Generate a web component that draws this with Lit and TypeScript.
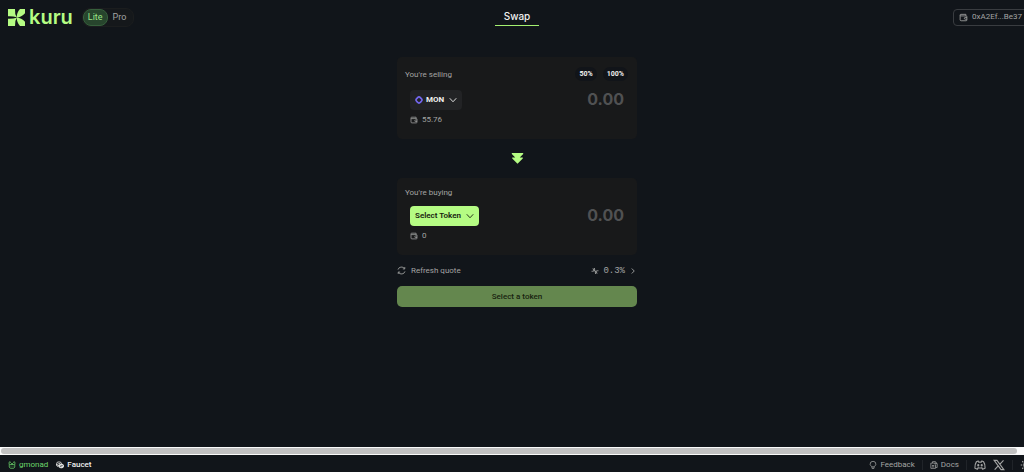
import { LitElement, html, css, svg } from "lit";
import { customElement, property, state } from "lit/decorators.js";

const icons = {
  logo: svg`<path d="M0 0H7Q6.600 5 8.700 8.300Q5 7 0 7.200zM17 0v4.200Q13.500 8.200 8.700 8.500Q8.800 3.400 12 0zM0 9.800Q5 10 8.700 8.700Q6.600 12 7 17H0zM8.700 8.500Q13.500 8.800 17 12.800V17h-5Q8.800 13.600 8.700 8.500z" fill="currentColor"/>`,
  wallet: svg`<path d="M2 4.300V12a1.800 1.800 0 0 0 1.800 1.800h8.800a1.400 1.400 0 0 0 1.400-1.400V6.600a1.400 1.400 0 0 0-1.400-1.400H3.300A1.300 1.300 0 0 1 3.300 2.400h8.900v2.600M14 8h-3a1.500 1.500 0 0 0 0 3h3"/>`,
  chevron: svg`<path d="M1.500 4.500 8 11.500l6.500-7" stroke-width="1.800"/>`,
  next: svg`<path d="m5.500 3 5 5-5 5" stroke-width="1.800"/>`,
  token: svg`<path d="M8 1.900C9.600 1.900 14.100 6.400 14.100 8S9.600 14.100 8 14.100 1.900 9.600 1.900 8 6.400 1.900 8 1.900z" stroke-width="3.400"/>`,
  down: svg`<path d="M1 1.200h14v1.400L10.800 6.800H14.500v1.200L8 14.500 1.500 8v-1.200H5.200L1 2.600z" fill="currentColor" stroke="none"/>`,
  refresh: svg`<path d="M1.800 6.400A6.400 6.400 0 0 1 13.400 4.800M14.200 9.600A6.400 6.400 0 0 1 2.600 11.200M13.800 1.800v3.400h-3.400M2.200 14.200v-3.400h3.400"/>`,
  slip: svg`<path d="M1 8.500h4L6.500 2l3 12L11 7.500h4M3 3.500 13 12.500" stroke-width="1.600"/>`,
  frog: svg`<path d="M2.500 5.500V12l2 2.500h7l2-2.500V5.500L11.500 7h-7zM1.500 5 3 1.500 6 3M14.500 5 13 1.500 10 3M6 7l2-3 2 3M6 9.500V11M10 9.500V11"/>`,
  coins: svg`<ellipse cx="6" cy="5.500" rx="5" ry="3.800"/><path d="M1 6v2.400c0 1.800 2 2.800 4.300 3M2.500 6.500l6-2"/><ellipse cx="10.600" cy="10" rx="4.800" ry="3.800" fill="#d8dadb"/><path d="M8 10.800 13 9" stroke="#11151a"/>`,
  bulb: svg`<path d="M5.500 11C3.300 9.600 2.300 8 2.300 6.300a5.700 5.700 0 0 1 11.400 0c0 1.700-1 3.300-3.200 4.700l-.8 4H6.300zM5.700 11.700h4.600"/>`,
  docs: svg`<path d="M5 4V1.300h5.500L14.300 5v8H12M10.300 1.500V5H14M1.700 4.200h6.100L11 7.400v7.300H1.700zM4 9h4.500M4 11.700h4.500"/>`,
  discord: svg`<path d="M5.500 2.700 3.300 3.500C1.600 6 1 9 1.200 12.200c1.200.9 2.300 1.200 3.400 1.300l1-1.800c1.600.5 3.200.5 4.800 0l1 1.800c1.100-.1 2.200-.4 3.400-1.300.2-3.200-.4-6.200-2.100-8.700l-2.200-.8-.8 1.500H6.300z"/><ellipse cx="5.700" cy="8.300" rx=".7" ry=".9"/><ellipse cx="10.300" cy="8.300" rx=".7" ry=".9"/>`,
  x: svg`<path d="M1.500 1.800h3.800l9.200 12.400h-3.800zM14 1.800 8.700 7.600M7 9.100l-4.800 5.100"/>`,
  sun: svg`<circle cx="8" cy="8" r="3"/><path d="M8 1v2M8 13v2M1 8h2M13 8h2M3 3l1.500 1.500M11.500 11.500 13 13M3 13l1.500-1.500M11.500 4.500 13 3"/>`,
};

type IconName = keyof typeof icons;

@customElement("kuru-icon")
export class KuruIcon extends LitElement {
  static styles = css`
    :host { display: inline-flex; flex: none; width: 8px; height: 8px; }
    svg { width: 100%; height: 100%; fill: none; stroke: currentColor; stroke-width: 1.5; }
    .solid { stroke: none; }
  `;
  @property() name: IconName = "wallet";
  render() {
    const solid = this.name === "logo";
    return html`<svg class=${solid ? "solid" : ""} viewBox=${solid ? "0 0 17 17" : "0 0 16 16"} aria-hidden="true">${icons[this.name]}</svg>`;
  }
}

@customElement("swap-card")
export class SwapCard extends LitElement {
  static styles = css`
    :host { display: block; background: #18191a; border-radius: 5px; padding: 9px 9px 14px 8px; }
    * { box-sizing: border-box; }
    button, input { font: inherit; color: inherit; border: 0; margin: 0; background: none; }
    .top, .middle { display: flex; align-items: center; justify-content: space-between; }
    .top { color: #a3a4a3; line-height: 11px; }
    .shares { display: flex; gap: 6px; padding: 1px 0; }
    .share { height: 14px; padding: 0 4px; border-radius: 7px; background: #111419; color: #e4e4e3; font-size: 7px; font-weight: 800; }
    .middle { margin-top: 8px; padding: 0 4px 0 5px; height: 20px; }
    .token { display: flex; align-items: center; gap: 3px; height: 20px; padding: 0 5px; border-radius: 4px; background: #222325; color: #f0f0ef; font-weight: 700; white-space: nowrap; }
    .token.empty { background: #b5fc83; color: #17220f; font-weight: 600; }
    .mark { color: #7467ef; }
    .caret { margin-left: 2px; }
    .amount { width: 100%; min-width: 0; flex: 1; height: 18px; align-self: flex-start; padding: 0; text-align: right; font: 700 16px/18px Inter, "Liberation Sans", sans-serif; outline: none; color: #e4e4e3; }
    .amount::placeholder { color: #505152; opacity: 1; }
    .balance { display: flex; align-items: center; gap: 4px; height: 10px; margin-top: 5px; padding-left: 5px; color: #a3a4a3; }
  `;
  @property() label = "";
  @property() token = "";
  @property() balance = "0";
  @property({ type: Array }) shares: string[] = [];

  render() {
    return html`
      <div class="top">
        <label for="amount">${this.label}</label>
        ${this.shares.length ? html`<div class="shares">${this.shares.map((s) => html`<button class="share">${s}</button>`)}</div>` : ""}
      </div>
      <div class="middle">
        <button class="token ${this.token ? "" : "empty"}">
          ${this.token ? html`<kuru-icon class="mark" name="token"></kuru-icon>` : ""}
          <span>${this.token || "Select Token"}</span>
          <kuru-icon class="caret" name="chevron"></kuru-icon>
        </button>
        <input id="amount" class="amount" inputmode="decimal" placeholder="0.00" />
      </div>
      <div class="balance"><kuru-icon name="wallet"></kuru-icon><span>${this.balance}</span></div>
    `;
  }
}

@customElement("app-root")
export class AppRoot extends LitElement {
  static styles = css`
    :host { display: flex; flex-direction: column; min-height: 100vh; overflow: hidden; background: #11151a; color: #a3a4a3; font: 400 8px/10px Roboto, "Liberation Sans", sans-serif; }
    * { box-sizing: border-box; }
    button { font: inherit; color: inherit; border: 0; margin: 0; padding: 0; background: none; }
    a { color: inherit; text-decoration: none; }
    .wide { width: calc(100% + 10px); }
    header { display: grid; grid-template-columns: 1fr auto 1fr; align-items: center; height: 34px; padding: 0 8px; }
    .brand { display: flex; align-items: center; gap: 9px; }
    .logo { display: flex; align-items: center; gap: 4px; color: #b5fc83; font: 600 20px/20px Inter, "Liberation Sans", sans-serif; }
    .logo kuru-icon { width: 17px; height: 17px; }
    .modes { display: flex; height: 19px; border: 1px solid #1b1d1e; border-radius: 8px; background: #15181b; font-size: 9px; }
    .mode { height: 17px; padding: 0 6px 0 4px; border: 1px solid transparent; border-radius: 8px; }
    .mode.on { background: #27452d; border-color: #365f3c; color: #9be488; padding: 0 4px; }
    .tab { width: 44px; padding: 2px 0 3px; border-bottom: 1px solid #a4f070; color: #f0f0ef; font: 500 10px/12px Inter, "Liberation Sans", sans-serif; text-align: center; }
    .account { justify-self: end; display: flex; align-items: center; gap: 4px; height: 17px; margin-right: -2px; padding: 0 5px; border: 1px solid #393c40; border-radius: 4px; white-space: nowrap; }
    .account kuru-icon { width: 9px; height: 9px; }
    main { flex: 1 0 auto; padding-top: 23px; }
    .swap { width: 240px; margin: 0 auto; }
    .flip { display: flex; justify-content: center; width: 100%; padding: 13px 0; color: #b5fc83; }
    .flip kuru-icon { width: 13px; height: 13px; }
    .info { display: flex; justify-content: space-between; align-items: center; height: 31px; }
    .refresh, .slippage { display: flex; align-items: center; gap: 5px; }
    .refresh kuru-icon { width: 9px; height: 9px; }
    .slippage { font-family: "Liberation Mono", monospace; font-size: 9px; gap: 4px; }
    .submit { display: block; width: 100%; height: 21px; border-radius: 5px; background: #64874e; color: #18230f; font-weight: 500; }
    .scroll { flex: none; height: 8px; padding: 1px 7px 1px 1px; background: #fafafa; }
    .thumb { height: 6px; border-radius: 3px; background: #c1c1c1; }
    footer { display: flex; justify-content: space-between; align-items: center; height: 17px; padding: 2px 2px 0 8px; white-space: nowrap; }
    .links { display: flex; align-items: center; gap: 8px; }
    .link { display: flex; align-items: center; gap: 3px; }
    .green { color: #6cd66b; }
    .white { color: #f0f0ef; font-weight: 500; }
    .rule { width: 1px; height: 10px; background: #202429; }
    .meta { gap: 7px; }
    .social { width: 12px; height: 12px; }
  `;
  @state() mode = "Lite";

  render() {
    return html`
      <header class="wide">
        <div class="brand">
          <a class="logo" href="#"><kuru-icon name="logo"></kuru-icon>kuru</a>
          <div class="modes">
            ${["Lite", "Pro"].map((m) => html`<button class="mode ${m === this.mode ? "on" : ""}" @click=${() => (this.mode = m)}>${m}</button>`)}
          </div>
        </div>
        <a class="tab" href="#swap">Swap</a>
        <button class="account"><kuru-icon name="wallet"></kuru-icon>0xA2Ef...Be37</button>
      </header>
      <main class="wide">
        <div class="swap">
          <swap-card label="You're selling" token="MON" balance="55.76" .shares=${["50%", "100%"]}></swap-card>
          <button class="flip" aria-label="Swap direction"><kuru-icon name="down"></kuru-icon></button>
          <swap-card label="You're buying" balance="0"></swap-card>
          <div class="info">
            <button class="refresh"><kuru-icon name="refresh"></kuru-icon>Refresh quote</button>
            <button class="slippage"><kuru-icon name="slip"></kuru-icon>0.3%<kuru-icon name="next"></kuru-icon></button>
          </div>
          <button class="submit">Select a token</button>
        </div>
      </main>
      <div class="scroll"><div class="thumb"></div></div>
      <footer class="wide">
        <div class="links">
          <a class="link green" href="#gmonad"><kuru-icon name="frog"></kuru-icon>gmonad</a>
          <a class="link white" href="#faucet"><kuru-icon name="coins"></kuru-icon>Faucet</a>
        </div>
        <div class="links meta">
          <a class="link" href="#feedback"><kuru-icon name="bulb"></kuru-icon>Feedback</a>
          <span class="rule"></span>
          <a class="link" href="#docs"><kuru-icon name="docs"></kuru-icon>Docs</a>
          <span class="rule"></span>
          <a class="link" href="#discord" aria-label="Discord"><kuru-icon class="social" name="discord"></kuru-icon></a>
          <a class="link" href="#x" aria-label="X"><kuru-icon class="social" name="x"></kuru-icon></a>
          <span class="rule"></span>
          <button class="link" aria-label="Theme"><kuru-icon class="social" name="sun"></kuru-icon></button>
        </div>
      </footer>
    `;
  }
}
